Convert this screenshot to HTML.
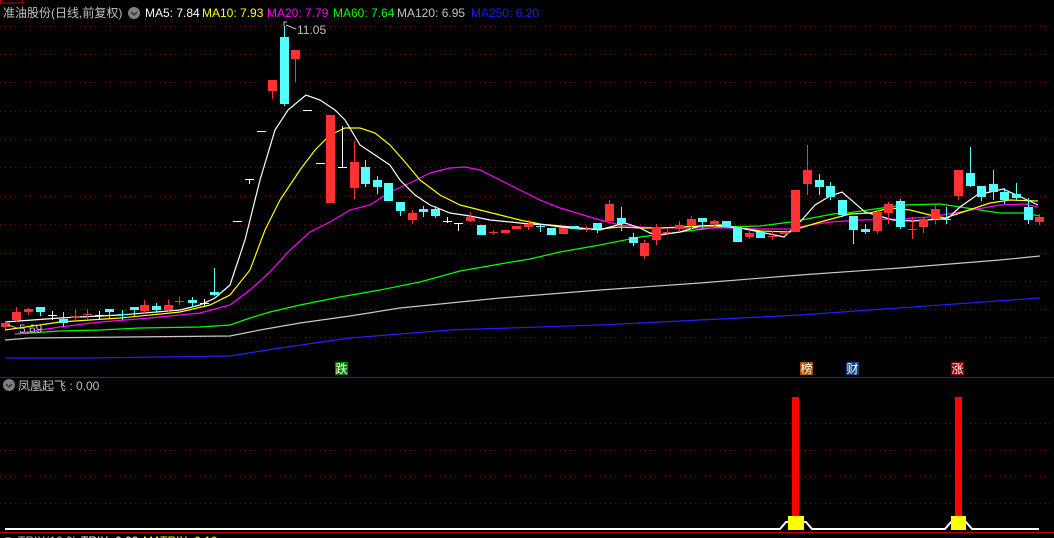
<!DOCTYPE html>
<html><head><meta charset="utf-8"><style>
html,body{margin:0;padding:0;background:#000;width:1054px;height:538px;overflow:hidden}
svg{position:absolute;left:0;top:0}
.t{font-family:"Liberation Sans","Noto Sans CJK SC",sans-serif;font-size:12px}
</style></head><body>
<svg id="s" width="1054" height="538" xmlns="http://www.w3.org/2000/svg">
<rect x="0" y="0" width="1054" height="538" fill="#000"/>
<g id="grid" stroke="#8b0000" stroke-width="1" stroke-dasharray="1,4"></g>
<rect x="0.5" y="-3" width="22" height="6" fill="none" stroke="#c00"/>
<line x1="0" y1="377.5" x2="1054" y2="377.5" stroke="#a00000"/>
<line x1="0" y1="532.5" x2="1054" y2="532.5" stroke="#c00000"/>
<polyline fill="none" stroke="#2020ff" stroke-width="1.2" points="5,358 90,358 230,356 280,348 350,338 450,330 600,325 800,315 1040,298"/>
<polyline fill="none" stroke="#c8c8c8" stroke-width="1.2" points="5,340 30,338 230,336 260,330 300,323 350,316 400,308 500,298 600,290 700,283 800,275 900,268 1000,260 1040,256"/>
<polyline fill="none" stroke="#00ff00" stroke-width="1.2" points="15,334 60,331 100,330 140,328 200,327 230,325 250,318 270,312 300,305 340,297 380,290 420,282 460,271 500,264 530,259 560,252 600,245 640,237 680,232 720,227 760,226 791,222 833,214 847,213 903,205 940,204 960,207 980,210 1000,213 1023,213 1040,216"/>
<polyline fill="none" stroke="#ff00ff" stroke-width="1.2" points="15,334 60,327 100,322 150,318 200,313 230,305 250,290 270,272 290,250 310,232 330,222 350,210 370,205 390,192 410,183 430,173 450,168 465,167 480,170 500,180 520,190 540,200 560,208 580,214 600,220 620,225 640,227 660,228 700,228 730,228 760,229 790,229 810,225 830,222 860,220 900,219 930,217 960,212 1000,205 1025,204 1038,207"/>
<polyline fill="none" stroke="#ffff00" stroke-width="1.2" points="5,330 60,322 120,318 180,312 210,305 230,295 250,270 265,230 280,200 300,170 315,150 330,135 345,128 360,128 375,133 390,145 405,162 420,180 440,195 460,205 480,210 500,215 520,220 540,224 560,227 580,229 600,229 620,227 640,228 660,228 680,227 700,226 720,226 740,228 760,231 790,232 800,228 820,222 850,214 870,213 890,208 910,210 930,215 945,218 960,213 990,203 1010,200 1038,201"/>
<polyline fill="none" stroke="#ffffff" stroke-width="1.2" points="5,322 60,318 120,315 180,310 200,305 215,298 230,285 245,240 260,180 275,130 288,110 306,95 320,100 335,110 345,120 360,145 375,155 390,165 400,180 415,195 430,205 450,213 470,216 490,220 510,222 530,224 550,225 570,227 590,229 600,230 610,227 625,223 640,228 650,233 660,235 680,232 700,226 720,225 740,228 760,232 784,237 800,222 815,205 830,196 842,192 865,212 893,220 913,221 940,219 947,219 960,207 977,195 1003,189 1023,198 1038,205"/>
<g id="c"></g>
<!-- lower panel -->
<polyline fill="none" stroke="#fff" stroke-width="2" points="5,529 780,529 786,522 806,522 812,529 945,529 951,522 966,522 972,529 1039,529"/>
<rect x="792" y="397" width="7" height="119" fill="#ff0000"/>
<rect x="788" y="516" width="16" height="14" fill="#ffff00"/>
<rect x="955" y="397" width="7" height="119" fill="#ff0000"/>
<rect x="951" y="516" width="15" height="14" fill="#ffff00"/>
<!-- markers -->
<rect x="335" y="362" width="13" height="13" fill="#008000"/><text x="335.5" y="373" class="t" fill="#fff" font-size="12">跌</text>
<rect x="800" y="362" width="13" height="13" fill="#a05000"/><text x="800.5" y="373" class="t" fill="#fff" font-size="12">榜</text>
<rect x="846" y="362" width="13" height="13" fill="#103c80"/><text x="846.5" y="373" class="t" fill="#fff" font-size="12">财</text>
<rect x="951" y="362" width="13" height="13" fill="#900000"/><text x="951.5" y="373" class="t" fill="#fff" font-size="12">涨</text>
<!-- labels -->
<text x="297" y="34" class="t" fill="#c0c0c0" font-size="12.5">11.05</text>
<polyline points="284,26 284,22 287,22 M" fill="none" stroke="#c0c0c0"/>
<line x1="286" y1="25" x2="296" y2="29" stroke="#c0c0c0"/>
<text x="19" y="333" class="t" fill="#c0c0c0" font-size="12.5">5.69</text>
<line x1="8" y1="325" x2="17" y2="328" stroke="#c0c0c0"/>
<!-- header -->
<text x="3" y="17" class="t" fill="#c0c0c0" font-size="12.5">准油股份(日线,前复权)</text>
<circle cx="134" cy="13" r="6" fill="#808080"/><path d="M131 12 L134 15 L137 12" stroke="#333" fill="none" stroke-width="1.5"/>
<text x="145" y="17" class="t" fill="#fff">MA5: 7.84</text>
<text x="202" y="17" class="t" fill="#ffff00">MA10: 7.93</text>
<text x="267" y="17" class="t" fill="#ff00ff">MA20: 7.79</text>
<text x="333" y="17" class="t" fill="#00ff00">MA60: 7.64</text>
<text x="397" y="17" class="t" fill="#c0c0c0">MA120: 6.95</text>
<text x="471" y="17" class="t" fill="#1a1aff">MA250: 6.20</text>
<circle cx="9" cy="385" r="6" fill="#808080"/><path d="M6 384 L9 387 L12 384" stroke="#333" fill="none" stroke-width="1.5"/>
<text x="18" y="390" class="t" fill="#c0c0c0">凤凰起飞 : 0.00</text>
<circle cx="8" cy="544" r="7" fill="#808080"/>
<text x="18" y="545" class="t" fill="#c0c0c0">TRIX(12,9)</text>
<text x="81" y="545" class="t" fill="#fff">TRIX: 0.00</text>
<text x="143" y="545" class="t" fill="#ffff00">MATRIX: 0.10</text>
</svg>
<script>
var ns="http://www.w3.org/2000/svg";
var g=document.getElementById('grid');
[26,54,82,111,139,167,196,224,253,281,309,337,423,450,476,503].forEach(function(y){
 var l=document.createElementNS(ns,'line');l.setAttribute('x1',0);l.setAttribute('x2',1054);l.setAttribute('y1',y+.5);l.setAttribute('y2',y+.5);g.appendChild(l);});
var C={r:'#ff3232',c:'#54ffff',w:'#ffffff'};
var d=[
[1,323,327,321,329,'r'],[12,312,320,307,322,'r'],[24,309,312,308,315,'r'],[36,307,312,307,316,'c'],[48,315,316,311,320,'w'],
[59,319,323,312,327,'c'],[71,316,318,309,320,'r'],[83,314,315,309,320,'r'],[95,315,316,311,319,'w'],[105,309,312,309,318,'c'],
[118,314,315,310,320,'c'],[130,307,310,307,316,'c'],[140,305,311,300,313,'r'],[152,306,310,303,313,'c'],[164,305,310,300,312,'r'],
[175,301,302,297,305,'r'],[188,300,303,297,307,'c'],[200,303,304,299,306,'w'],[210,292,295,268,296,'c'],
[233,221,222,221,222,'w'],[245,179,180,179,184,'w'],[257,131,132,131,132,'w'],[268,80,91,80,99,'r'],[280,37,104,26,106,'c'],
[291,50,59,50,82,'r'],[303,110,111,110,111,'w'],[316,163,164,163,164,'w'],[326,115,203,115,203,'r'],[338,167,168,126,168,'w'],
[350,162,188,141,199,'r'],[361,167,184,160,187,'c'],[373,180,187,176,194,'c'],[384,183,201,183,201,'c'],[396,202,211,202,216,'c'],
[408,213,220,210,224,'r'],[419,209,212,206,217,'c'],[431,209,216,206,218,'c'],[443,221,222,217,223,'w'],[454,223,224,223,231,'w'],
[466,217,221,212,222,'r'],[477,225,235,225,235,'c'],[489,232,233,230,235,'r'],[501,230,233,230,233,'r'],[512,226,229,226,229,'r'],
[524,224,227,220,230,'r'],[536,226,227,225,232,'c'],[547,228,235,228,235,'c'],[559,228,234,228,234,'r'],[570,226,229,226,229,'c'],
[582,229,230,226,232,'r'],[593,223,229,223,233,'c'],[605,204,221,200,221,'r'],[617,218,224,207,231,'c'],[629,237,243,233,246,'c'],
[640,243,256,240,259,'r'],[652,227,240,224,245,'r'],[663,232,233,229,235,'r'],[675,225,229,221,232,'r'],[687,219,226,216,229,'r'],
[698,218,222,218,228,'c'],[710,221,224,220,226,'r'],[722,221,227,221,227,'c'],[733,227,242,227,242,'c'],[745,233,237,230,239,'r'],
[756,232,238,232,238,'c'],[768,236,237,231,240,'r'],[780,232,234,232,234,'r'],[791,190,232,190,232,'r'],[803,170,184,145,195,'r'],
[815,180,187,174,195,'c'],[826,186,197,182,200,'c'],[838,200,215,200,217,'c'],[849,216,230,216,244,'c'],[861,229,232,224,234,'c'],
[873,212,231,209,234,'r'],[884,204,213,202,224,'r'],[896,201,227,199,229,'c'],[908,229,230,217,239,'r'],[919,219,227,217,233,'r'],
[931,209,219,205,224,'r'],[942,219,220,207,224,'c'],[954,170,196,170,200,'r'],[966,173,186,147,187,'c'],[977,186,197,186,201,'c'],
[989,184,192,170,200,'c'],[1000,192,200,188,204,'c'],[1012,194,198,183,200,'c'],[1024,207,220,198,224,'c'],[1035,217,222,214,225,'r']];
var cg=document.getElementById('c');
d.forEach(function(a){var col=C[a[5]];var x=a[0];
 var w=document.createElementNS(ns,'line');w.setAttribute('x1',x+4.5);w.setAttribute('x2',x+4.5);w.setAttribute('y1',a[3]);w.setAttribute('y2',a[4]);w.setAttribute('stroke',col);cg.appendChild(w);
 var r=document.createElementNS(ns,'rect');r.setAttribute('x',x);r.setAttribute('y',a[1]);r.setAttribute('width',9);r.setAttribute('height',Math.max(1,a[2]-a[1]));r.setAttribute('fill',col);cg.appendChild(r);});
</script>
</body></html>
